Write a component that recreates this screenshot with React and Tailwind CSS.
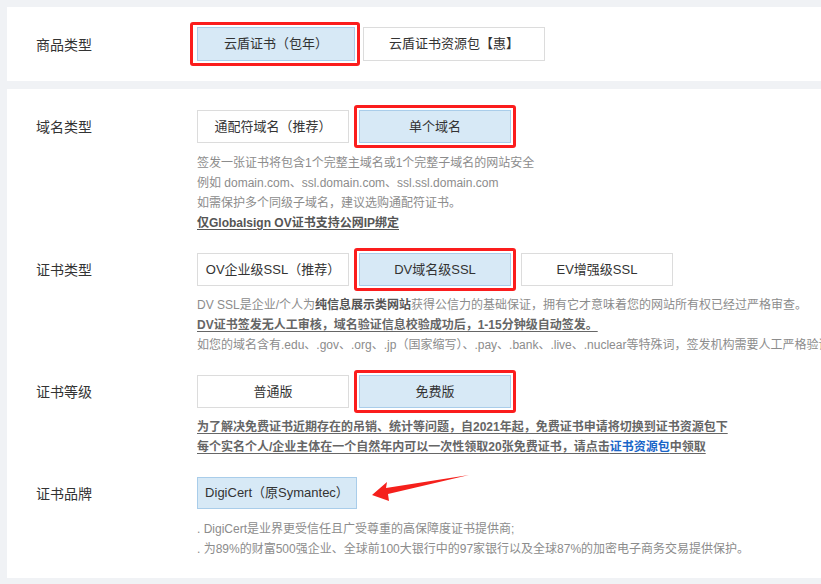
import React from "react";

const FONT = { fontFamily: '"Liberation Sans", "Noto Sans CJK SC", sans-serif' };

function Btn({ children, sel, red, w = "w-[152px]", h = "h-[33px]", redCls = "-inset-[5px]" }) {
  return (
    <div className="relative shrink-0">
      <div
        className={
          sel
            ? `${w} ${h} flex items-center justify-center text-[13px] text-[#333] border border-[#a9cdea] bg-[#d7e9f6]`
            : `${w} ${h} flex items-center justify-center text-[13px] text-[#333] border border-[#dcdcdc] bg-white`
        }
      >
        {children}
      </div>
      {red && <div className={`absolute ${redCls} border-[3px] border-[#fb1d1d] rounded-[3px]`} />}
    </div>
  );
}

function Label({ children }) {
  return (
    <div className="w-[161px] shrink-0 h-[33px] pt-[2px] flex items-center text-[14px] text-[#333]">{children}</div>
  );
}

function Arrow() {
  return (
    <svg
      className="absolute left-[168px] -top-[8px]"
      width="110"
      height="40"
      viewBox="0 0 110 40"
    >
      <polygon points="7,26 22,13 21,19 104,6 23,25 24,32" fill="#f5201c" />
    </svg>
  );
}

export default function App() {
  return (
    <div style={FONT} className="w-[821px] h-[584px] overflow-hidden bg-[#f0f2f5] pt-[7px] pl-[7px] whitespace-nowrap">
      {/* Panel 1 */}
      <div className="w-[900px] h-[74px] bg-white pl-[29px] flex items-center">
        <Label>商品类型</Label>
        <div className="flex gap-[8px]">
          <Btn sel red w="w-[158px]" h="h-[34px]" redCls="-left-[7px] -right-[5px] -top-[5px] -bottom-[5px]">
            云盾证书（包年）
          </Btn>
          <Btn w="w-[182px]" h="h-[34px]">云盾证书资源包【惠】</Btn>
        </div>
      </div>

      {/* Panel 2 */}
      <div className="mt-[8px] w-[900px] h-[489px] bg-white pl-[29px] pt-[21px] flex flex-col gap-[20px]">
        {/* 域名类型 */}
        <div className="flex">
          <Label>域名类型</Label>
          <div>
            <div className="flex gap-[10px]">
              <Btn>通配符域名（推荐）</Btn>
              <Btn sel red>单个域名</Btn>
            </div>
            <div className="mt-[10px] text-[12px] leading-[20px] text-[#8c8c8c]">
              <div>签发一张证书将包含1个完整主域名或1个完整子域名的网站安全</div>
              <div>例如 domain.com、ssl.domain.com、ssl.ssl.domain.com</div>
              <div>如需保护多个同级子域名，建议选购通配符证书。</div>
              <div className="font-bold text-[#555] underline underline-offset-2">仅Globalsign OV证书支持公网IP绑定</div>
            </div>
          </div>
        </div>

        {/* 证书类型 */}
        <div className="flex">
          <Label>证书类型</Label>
          <div>
            <div className="flex gap-[10px]">
              <Btn>OV企业级SSL（推荐）</Btn>
              <Btn sel red>DV域名级SSL</Btn>
              <Btn>EV增强级SSL</Btn>
            </div>
            <div className="mt-[9px] text-[12px] leading-[20px] text-[#8c8c8c]">
              <div>
                DV SSL是企业/个人为<span className="font-bold text-[#555]">纯信息展示类网站</span>获得公信力的基础保证，拥有它才意味着您的网站所有权已经过严格审查。
              </div>
              <div className="font-bold text-[#666] underline underline-offset-2">DV证书签发无人工审核，域名验证信息校验成功后，1-15分钟级自动签发。</div>
              <div>如您的域名含有.edu、.gov、.org、.jp（国家缩写）、.pay、.bank、.live、.nuclear等特殊词，签发机构需要人工严格验证</div>
            </div>
          </div>
        </div>

        {/* 证书等级 */}
        <div className="flex">
          <Label>证书等级</Label>
          <div>
            <div className="flex gap-[10px]">
              <Btn>普通版</Btn>
              <Btn sel red>免费版</Btn>
            </div>
            <div className="mt-[9px] text-[12px] leading-[20px] font-bold text-[#666] underline underline-offset-2">
              <div>为了解决免费证书近期存在的吊销、统计等问题，自2021年起，免费证书申请将切换到证书资源包下</div>
              <div>
                每个实名个人/企业主体在一个自然年内可以一次性领取20张免费证书，请点击<span className="text-[#1a66c8]">证书资源包</span>中领取
              </div>
            </div>
          </div>
        </div>

        {/* 证书品牌 */}
        <div className="flex">
          <Label>证书品牌</Label>
          <div>
            <div className="flex">
              <div className="relative">
                <Btn sel w="w-[160px]" h="h-[32px]">DigiCert（原Symantec）</Btn>
                <Arrow />
              </div>
            </div>
            <div className="mt-[10px] text-[12px] leading-[20px] text-[#8c8c8c]">
              <div>. DigiCert是业界更受信任且广受尊重的高保障度证书提供商;</div>
              <div>. 为89%的财富500强企业、全球前100大银行中的97家银行以及全球87%的加密电子商务交易提供保护。</div>
            </div>
          </div>
        </div>
      </div>
    </div>
  );
}
